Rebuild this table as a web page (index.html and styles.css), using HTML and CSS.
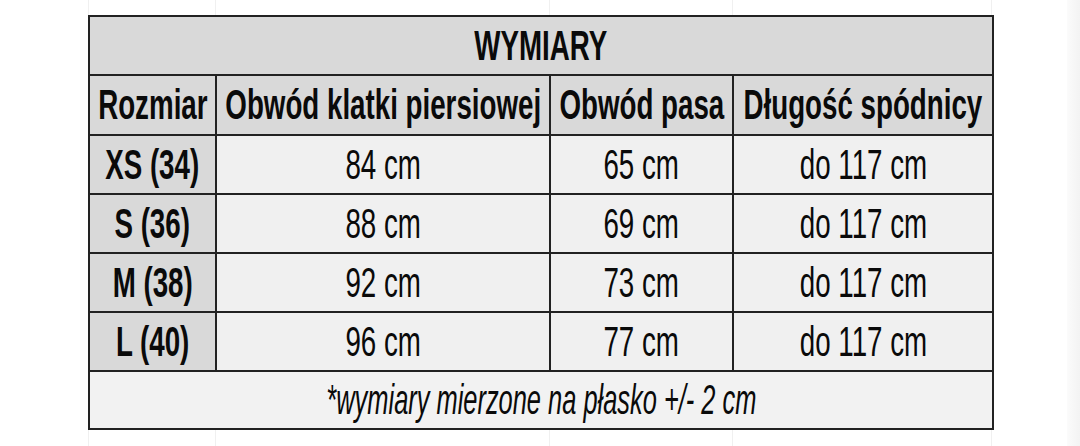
FILE: index.html
```html
<!DOCTYPE html>
<html lang="pl">
<head>
<meta charset="utf-8">
<title>Wymiary</title>
<link rel="stylesheet" href="styles.css">
</head>
<body>
<div class="page">
  <table class="sizes">
    <colgroup>
      <col class="c1"><col class="c2"><col class="c3"><col class="c4">
    </colgroup>
    <tr class="title-row">
      <td colspan="4" class="head"><div class="c"><span class="t">WYMIARY</span></div></td>
    </tr>
    <tr class="header-row">
      <td class="head"><div class="c"><span class="t">Rozmiar</span></div></td>
      <td class="head"><div class="c"><span class="t">Obwód klatki piersiowej</span></div></td>
      <td class="head"><div class="c"><span class="t">Obwód pasa</span></div></td>
      <td class="head"><div class="c"><span class="t">Długość spódnicy</span></div></td>
    </tr>
    <tr class="body-row">
      <td class="size"><div class="c"><span class="t">XS (34)</span></div></td>
      <td class="val"><div class="c"><span class="t">84 cm</span></div></td>
      <td class="val"><div class="c"><span class="t">65 cm</span></div></td>
      <td class="val"><div class="c"><span class="t">do 117 cm</span></div></td>
    </tr>
    <tr class="body-row">
      <td class="size"><div class="c"><span class="t">S (36)</span></div></td>
      <td class="val"><div class="c"><span class="t">88 cm</span></div></td>
      <td class="val"><div class="c"><span class="t">69 cm</span></div></td>
      <td class="val"><div class="c"><span class="t">do 117 cm</span></div></td>
    </tr>
    <tr class="body-row">
      <td class="size"><div class="c"><span class="t">M (38)</span></div></td>
      <td class="val"><div class="c"><span class="t">92 cm</span></div></td>
      <td class="val"><div class="c"><span class="t">73 cm</span></div></td>
      <td class="val"><div class="c"><span class="t">do 117 cm</span></div></td>
    </tr>
    <tr class="body-row">
      <td class="size"><div class="c"><span class="t">L (40)</span></div></td>
      <td class="val"><div class="c"><span class="t">96 cm</span></div></td>
      <td class="val"><div class="c"><span class="t">77 cm</span></div></td>
      <td class="val"><div class="c"><span class="t">do 117 cm</span></div></td>
    </tr>
    <tr class="note-row">
      <td colspan="4" class="note"><div class="c"><span class="t">*wymiary mierzone na płasko +/- 2 cm</span></div></td>
    </tr>
  </table>
  <div class="edge"></div>
</div>
</body>
</html>
```

FILE: styles.css
```css
html, body {
  margin: 0;
  padding: 0;
  background: #ffffff;
}

.page {
  width: 1080px;
  height: 446px;
  position: relative;
  padding: 15px 0 0 88px;
  box-sizing: border-box;
  font-family: "Liberation Sans", Arial, sans-serif;
  color: #0a0a0a;
  background-color: #ffffff;
  background-image:
    linear-gradient(#f0f0f0, #f0f0f0),
    linear-gradient(#f0f0f0, #f0f0f0),
    linear-gradient(#f0f0f0, #f0f0f0),
    linear-gradient(#f0f0f0, #f0f0f0),
    linear-gradient(#f0f0f0, #f0f0f0);
  background-size: 1px 100%;
  background-repeat: no-repeat;
  background-position: 88px 0, 215px 0, 549px 0, 732px 0, 991px 0;
}

.sizes {
  border-collapse: collapse;
  table-layout: fixed;
  width: 904px;
  border: 2px solid #222;
}

.c1 { width: 127px; }
.c2 { width: 334px; }
.c3 { width: 183px; }
.c4 { width: 260px; }

.sizes td {
  border: 2px solid #222;
  padding: 0;
  vertical-align: middle;
  overflow: visible;
}

.c {
  display: flex;
  justify-content: center;
  align-items: center;
  white-space: nowrap;
  height: 100%;
}

.t {
  display: inline-block;
  font-size: 42px;
  line-height: 42px;
  transform: scaleX(0.66);
  transform-origin: center;
}

.title-row td { height: 57px; }
.header-row td { height: 58px; }
.body-row td { height: 57px; }
.note-row td { height: 56px; }

.head {
  background: #d9d9d9;
  font-weight: bold;
}

.size {
  background: #d9d9d9;
  font-weight: bold;
}

.val {
  background: #f0f0f0;
}

.note {
  background: #f2f2f2;
  font-style: italic;
}

.note .t {
  transform: scaleX(0.605);
}

.edge {
  position: absolute;
  top: 0;
  right: 0;
  width: 13px;
  height: 446px;
  background: linear-gradient(to right, #fbfbfb, #f3f3f3);
}
```
